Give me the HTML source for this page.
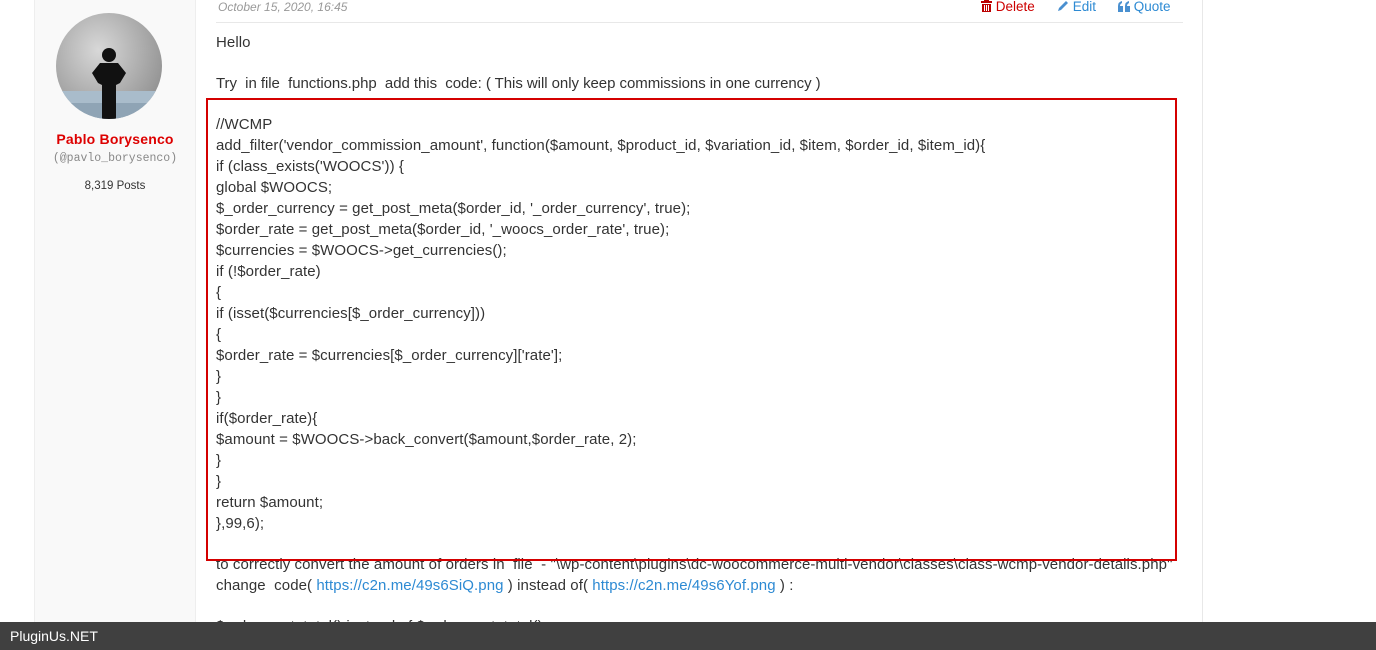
<!DOCTYPE html>
<html><head><meta charset="utf-8"><style>
html,body{margin:0;padding:0;width:1376px;height:650px;overflow:hidden;background:#fff;font-family:"Liberation Sans",Arial,sans-serif;color:#333}
.side{position:absolute;left:34px;top:0;width:160px;height:650px;background:#f9f9f9;border-left:1px solid #eee;border-right:1px solid #eee}
.main{position:absolute;left:196px;top:0;width:1006px;height:650px;border-right:1px solid #e8e8e8}
.av{position:absolute;left:56px;top:13px;width:106px;height:106px;border-radius:50%;overflow:hidden;background:radial-gradient(ellipse at 40% 35%,#d8d8d8,#9a9a9a 70%,#7a7a7a)}
.name{position:absolute;left:34px;width:162px;text-align:center;top:131px;color:#d00;font-weight:bold;font-size:14px;letter-spacing:0.2px}
.handle{position:absolute;left:34px;width:162px;text-align:center;top:152px;color:#888;font-family:"Liberation Mono",monospace;font-size:11.5px}
.posts{position:absolute;left:34px;width:162px;text-align:center;top:180px;font-size:11.5px}
.date{position:absolute;left:218px;top:0;font-size:12px;font-style:italic;color:#999}
.hr{position:absolute;left:216px;top:22px;width:967px;height:1px;background:#e8e8e8}
.act{position:absolute;top:-1px;font-size:13.5px}
.t{position:absolute;left:216px;font-size:15px;letter-spacing:0.08px;line-height:21px;white-space:pre}
.box{position:absolute;left:206px;top:98px;width:967px;height:459px;border:2px solid #d40000}
a{color:#2d8ad3;text-decoration:none}
.foot{position:absolute;left:0;top:622px;width:1376px;height:28px;background:#404040;color:#fff;font-size:14px;line-height:28px;padding-left:10px;box-sizing:border-box}
</style></head><body>
<div class="side"></div>
<div class="main"></div>
<div class="av"><svg width="106" height="106" viewBox="0 0 106 106">
<rect x="0" y="78" width="106" height="28" fill="#a9bccb"/>
<rect x="0" y="90" width="106" height="16" fill="#8fa4b5"/>
<circle cx="53" cy="42" r="7" fill="#111"/>
<path d="M44 50 L62 50 L70 60 L64 70 L60 72 L60 106 L46 106 L46 72 L42 70 L36 60 Z" fill="#111"/>
</svg></div>
<div class="name">Pablo Borysenco</div>
<div class="handle">(@pavlo_borysenco)</div>
<div class="posts">8,319 Posts</div>
<div class="date">October 15, 2020, 16:45</div>
<div class="act" style="left:981px;color:#c00"><svg width="11" height="12" viewBox="0 0 11 12" style="vertical-align:-1px"><rect x="0" y="1" width="11" height="2" fill="#b00"/><rect x="3" y="0" width="5" height="2" fill="#b00"/><rect x="1" y="4" width="9" height="8" fill="#b00"/><rect x="3" y="5" width="1" height="6" fill="#fff"/><rect x="5" y="5" width="1" height="6" fill="#fff"/><rect x="7" y="5" width="1" height="6" fill="#fff"/></svg> Delete</div>
<div class="act" style="left:1057px;color:#2d8ad3"><svg width="12" height="12" viewBox="0 0 12 12" style="vertical-align:-1px"><path d="M1 11 L2 8 L9 1 L11 3 L4 10 Z" fill="#4a90d0"/></svg> Edit</div>
<div class="act" style="left:1118px;color:#2d8ad3"><svg width="12" height="11" viewBox="0 0 12 11" style="vertical-align:-1px"><path d="M0 11 V5 Q0 1 4 0 V2 Q2 3 2 5 H5 V11 Z M7 11 V5 Q7 1 11 0 V2 Q9 3 9 5 H12 V11 Z" fill="#4a90d0"/></svg> Quote</div>
<div class="hr"></div>
<div class="t" style="top:32px">Hello</div>
<div class="t" style="top:73px;letter-spacing:-0.05px">Try  in file  functions.php  add this  code: ( This will only keep commissions in one currency )</div>
<div class="t" style="top:114px">//WCMP
add_filter('vendor_commission_amount', function($amount, $product_id, $variation_id, $item, $order_id, $item_id){
if (class_exists('WOOCS')) {
global $WOOCS;
$_order_currency = get_post_meta($order_id, '_order_currency', true);
$order_rate = get_post_meta($order_id, '_woocs_order_rate', true);
$currencies = $WOOCS-&gt;get_currencies();
if (!$order_rate)
{
if (isset($currencies[$_order_currency]))
{
$order_rate = $currencies[$_order_currency]['rate'];
}
}
if($order_rate){
$amount = $WOOCS-&gt;back_convert($amount,$order_rate, 2);
}
}
return $amount;
},99,6);</div>
<div class="t" style="top:554px">to correctly convert the amount of orders in  file  - "\wp-content\plugins\dc-woocommerce-multi-vendor\classes\class-wcmp-vendor-details.php"</div>
<div class="t" style="top:575px">change  code( <a>https://c2n.me/49s6SiQ.png</a> ) instead of( <a>https://c2n.me/49s6Yof.png</a> ) :</div>
<div class="t" style="top:616px">$order-&gt;get_total() instead of $order-&gt;get_total()</div>
<div class="box"></div>
<div class="foot">PluginUs.NET</div>
</body></html>
